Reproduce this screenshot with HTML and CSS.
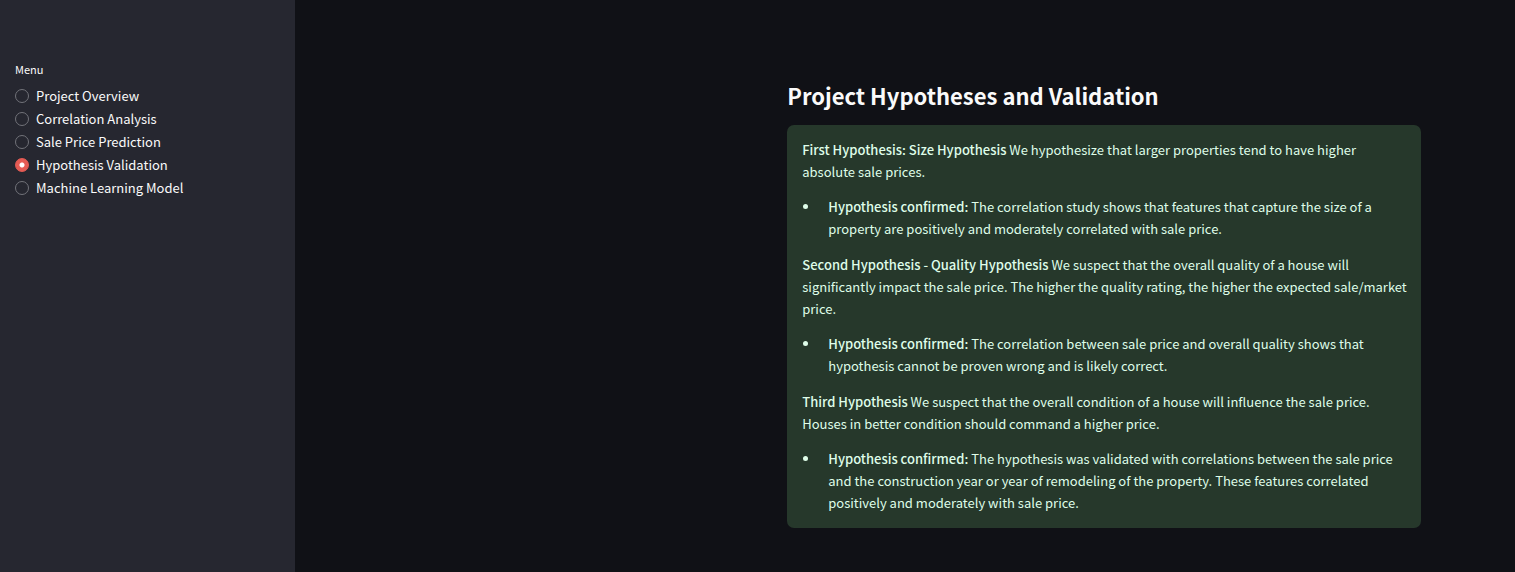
FILE: index.html
```html
<!DOCTYPE html>
<html lang="en">
<head>
<meta charset="utf-8">
<meta name="viewport" content="width=device-width, initial-scale=1">
<title>Project Hypotheses and Validation</title>
<link rel="stylesheet" href="styles.css">
</head>
<body>
<div class="app">
  <aside class="sidebar">
    <fieldset class="menu">
      <legend class="menu-title">Menu</legend>
      <label class="menu-item"><input class="radio" type="radio" name="page"><span>Project Overview</span></label>
      <label class="menu-item"><input class="radio" type="radio" name="page"><span>Correlation Analysis</span></label>
      <label class="menu-item"><input class="radio" type="radio" name="page"><span>Sale Price Prediction</span></label>
      <label class="menu-item"><input class="radio" type="radio" name="page" checked><span>Hypothesis Validation</span></label>
      <label class="menu-item"><input class="radio" type="radio" name="page"><span>Machine Learning Model</span></label>
    </fieldset>
  </aside>
  <main class="main">
    <section class="content">
      <h1 class="title">Project Hypotheses and Validation</h1>
      <div class="alert">
        <p><strong>First Hypothesis: Size Hypothesis</strong> We hypothesize that larger properties tend to have higher absolute sale prices.</p>
        <ul>
          <li><strong>Hypothesis confirmed:</strong> The correlation study shows that features that capture the size of a property are positively and moderately correlated with sale price.</li>
        </ul>
        <p><strong>Second Hypothesis - Quality Hypothesis</strong> We suspect that the overall quality of a house will significantly impact the sale price. The higher the quality rating, the higher the expected sale/market price.</p>
        <ul>
          <li><strong>Hypothesis confirmed:</strong> The correlation between sale price and overall quality shows that hypothesis cannot be proven wrong and is likely correct.</li>
        </ul>
        <p><strong>Third Hypothesis</strong> We suspect that the overall condition of a house will influence the sale price. Houses in better condition should command a higher price.</p>
        <ul>
          <li><strong>Hypothesis confirmed:</strong> The hypothesis was validated with correlations between the sale price and the construction year or year of remodeling of the property. These features correlated positively and moderately with sale price.</li>
        </ul>
      </div>
    </section>
  </main>
</div>
</body>
</html>
```

FILE: styles.css
```css
* {
  box-sizing: border-box;
}

body {
  margin: 0;
  background: #101116;
  color: #fafafa;
  font-family: "Noto Sans CJK SC", "Noto Sans", sans-serif;
  font-size: 13px;
  line-height: 22px;
}

.app {
  display: flex;
  min-height: 100vh;
}

.sidebar {
  flex: 0 0 295px;
  padding: 58px 15px 16px;
  background: #262730;
}

.menu {
  display: flex;
  flex-direction: column;
  margin: 0;
  padding: 0;
  border: 0;
}

.menu-title {
  padding: 0;
  margin-bottom: 4px;
  font-size: 11px;
}

.menu-item {
  display: flex;
  align-items: center;
  gap: 7px;
  height: 23px;
  cursor: pointer;
}

.radio {
  appearance: none;
  flex: none;
  width: 14px;
  height: 14px;
  margin: 0;
  border: 1px solid #72737a;
  border-radius: 50%;
  background: #262730;
}

.radio:checked {
  border-color: #e55b54;
  background: radial-gradient(circle, #ffffff 2px, #e55b54 3px);
}

.main {
  flex: 1;
  display: grid;
  grid-template-columns: 3fr 5fr;
  align-items: start;
  column-gap: 18px;
  padding: 79px 94px 44px;
}

.content {
  grid-column: 2;
}

.title {
  margin: 0 0 14px;
  font-size: 22px;
  font-weight: 600;
  line-height: 32px;
}

.alert {
  padding: 14px 12px 14px 15px;
  border-radius: 7px;
  background: #26382b;
  color: #dffde9;
}

.alert strong {
  font-weight: 500;
}

.alert p {
  margin: 0 0 13px;
}

.alert ul {
  margin: 0 0 14px;
  padding-left: 18px;
}

.alert li {
  padding-left: 8px;
}

.alert ul:last-child {
  margin-bottom: 0;
}
```
